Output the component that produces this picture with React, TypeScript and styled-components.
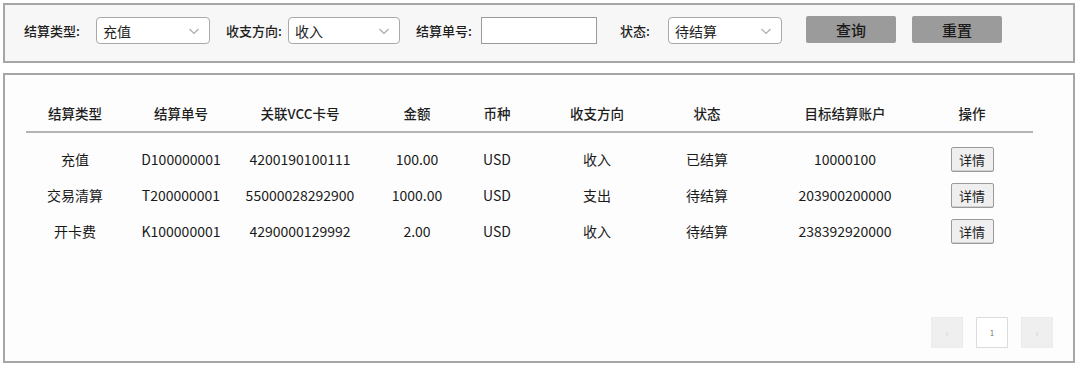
import styled, { createGlobalStyle } from "styled-components";

interface Row {
    type: string;
    no: string;
    card: string;
    amount: string;
    currency: string;
    direction: string;
    status: string;
    account: string;
}

const rows: Row[] = [
    { type: "充值", no: "D100000001", card: "4200190100111", amount: "100.00", currency: "USD", direction: "收入", status: "已结算", account: "10000100" },
    { type: "交易清算", no: "T200000001", card: "55000028292900", amount: "1000.00", currency: "USD", direction: "支出", status: "待结算", account: "203900200000" },
    { type: "开卡费", no: "K100000001", card: "4290000129992", amount: "2.00", currency: "USD", direction: "收入", status: "待结算", account: "238392920000" },
];

const headers = ["结算类型", "结算单号", "关联VCC卡号", "金额", "币种", "收支方向", "状态", "目标结算账户", "操作"];

const Chevron = () => (
    <svg width="14" height="14" viewBox="0 0 14 14" fill="none">
        <path d="M2.5 5 L7 9.5 L11.5 5" stroke="#a8a8a8" strokeWidth="1.1" />
    </svg>
);

const App = () => {
    return (
        <>
            <GlobalStyle />
            <Page>
                <FilterBar>
                    <Label $w={72}>结算类型:</Label>
                    <Select $w={114}>
                        <span>充值</span>
                        <Chevron />
                    </Select>
                    <Label $w={62} $ml={16}>收支方向:</Label>
                    <Select $w={112}>
                        <span>收入</span>
                        <Chevron />
                    </Select>
                    <Label $w={65} $ml={16}>结算单号:</Label>
                    <Input />
                    <Label $w={48} $ml={23}>状态:</Label>
                    <Select $w={114}>
                        <span>待结算</span>
                        <Chevron />
                    </Select>
                    <GrayButton $ml={24}>查询</GrayButton>
                    <GrayButton $ml={16}>重置</GrayButton>
                </FilterBar>

                <ListPanel>
                    <Table>
                        <HeaderRow>
                            {headers.map((h) => (
                                <Cell key={h}>{h}</Cell>
                            ))}
                            <Cell />
                        </HeaderRow>
                        <Body>
                            {rows.map((r) => (
                                <DataRow key={r.no}>
                                    <Cell>{r.type}</Cell>
                                    <Cell>{r.no}</Cell>
                                    <Cell>{r.card}</Cell>
                                    <Cell>{r.amount}</Cell>
                                    <Cell>{r.currency}</Cell>
                                    <Cell>{r.direction}</Cell>
                                    <Cell>{r.status}</Cell>
                                    <Cell>{r.account}</Cell>
                                    <Cell>
                                        <DetailButton>详情</DetailButton>
                                    </Cell>
                                    <Cell />
                                </DataRow>
                            ))}
                        </Body>
                    </Table>
                    <Pager>
                        <PageBox $muted>‹</PageBox>
                        <PageBox>1</PageBox>
                        <PageBox $muted>›</PageBox>
                    </Pager>
                </ListPanel>
            </Page>
        </>
    );
};

export default App;

const GlobalStyle = createGlobalStyle`
  body {
    margin: 0;
    background: #ffffff;
    font-family: "Noto Sans CJK SC", "Noto Sans", sans-serif;
    color: #222;
  }
`;

const Page = styled.div`
  width: 1080px;
  height: 367px;
  padding: 3px 5px 0 3px;
  box-sizing: border-box;
  display: flex;
  flex-direction: column;
  gap: 10px;
`;

const FilterBar = styled.div`
  height: 60px;
  box-sizing: border-box;
  border: 2px solid #a6a6a6;
  background: #f7f7f7;
  display: flex;
  align-items: center;
  padding: 0 0 5px 19px;
`;

const Label = styled.span<{ $w: number; $ml?: number }>`
  width: ${(p) => p.$w}px;
  margin-left: ${(p) => p.$ml ?? 0}px;
  flex-shrink: 0;
  font-size: 13px;
  font-weight: 500;
  color: #1e1e1e;
  white-space: nowrap;
`;

const Select = styled.div<{ $w: number }>`
  width: ${(p) => p.$w}px;
  height: 27px;
  box-sizing: border-box;
  border: 1px solid #a9a9a9;
  border-radius: 4px;
  background: #fff;
  display: flex;
  align-items: center;
  justify-content: space-between;
  padding: 0 8px 0 6px;
  font-size: 14px;
  color: #222;
`;

const Input = styled.div`
  width: 116px;
  height: 27px;
  box-sizing: border-box;
  border: 1px solid #9a9a9a;
  background: #fff;
`;

const GrayButton = styled.div<{ $ml: number }>`
  margin-left: ${(p) => p.$ml}px;
  width: 90px;
  height: 27px;
  margin-top: -2px;
  background: #9b9b9b;
  border-radius: 2px;
  display: flex;
  align-items: center;
  justify-content: center;
  font-size: 15px;
  font-weight: 500;
  color: #1a1a1a;
`;

const ListPanel = styled.div`
  height: 290px;
  box-sizing: border-box;
  border: 2px solid #a6a6a6;
  background: #fdfdfd;
  display: flex;
  flex-direction: column;
  padding: 19px 20px 13px 21px;
`;

const Table = styled.div`
  width: 1007px;
  display: flex;
  flex-direction: column;
`;

const columns = "98px 114px 124px 110px 50px 150px 70px 206px 48px 1fr";

const HeaderRow = styled.div`
  display: grid;
  grid-template-columns: ${columns};
  height: 37px;
  align-items: center;
  border-bottom: 2px solid #b4b4b4;
  font-size: 13.5px;
  font-weight: 500;
  color: #1e1e1e;
`;

const Body = styled.div`
  padding-top: 8px;
  display: flex;
  flex-direction: column;
`;

const DataRow = styled.div`
  display: grid;
  grid-template-columns: ${columns};
  height: 36px;
  align-items: center;
  font-size: 14px;
  color: #1a1a1a;
`;

const Cell = styled.div`
  display: flex;
  justify-content: center;
  white-space: nowrap;
`;

const DetailButton = styled.div`
  width: 43px;
  height: 25px;
  box-sizing: border-box;
  border: 1px solid #9a9a9a;
  border-radius: 2px;
  background: #efefef;
  box-shadow: inset 0 -1px 0 #d0d0d0;
  display: flex;
  align-items: center;
  justify-content: center;
  font-size: 13px;
  color: #222;
`;

const Pager = styled.div`
  margin-top: auto;
  display: flex;
  justify-content: flex-end;
  gap: 13px;
`;

const PageBox = styled.div<{ $muted?: boolean }>`
  width: 32px;
  height: 31px;
  box-sizing: border-box;
  border: 1px solid ${(p) => (p.$muted ? "#ececec" : "#dcdcdc")};
  background: ${(p) => (p.$muted ? "#efefef" : "#fff")};
  display: flex;
  align-items: center;
  justify-content: center;
  font-size: ${(p) => (p.$muted ? "10px" : "8px")};
  color: ${(p) => (p.$muted ? "#d0d0d0" : "#777")};
`;
